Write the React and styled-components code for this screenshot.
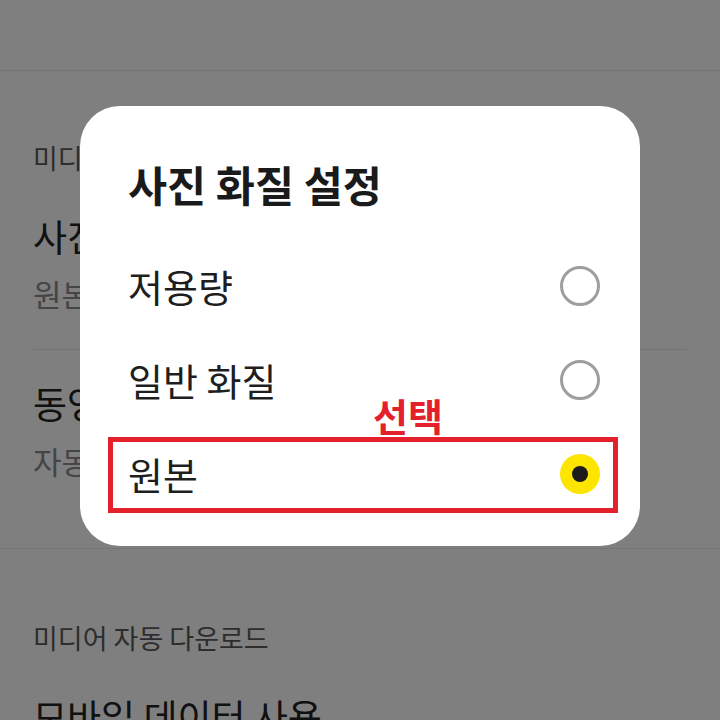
import React from "react";
import styled, { createGlobalStyle } from "styled-components";

const Global = createGlobalStyle`
  html, body { margin: 0; padding: 0; background: #ffffff; }
  body { font-family: "Noto Sans CJK KR", "Noto Sans", sans-serif; overflow: hidden; }
  * { box-sizing: border-box; }
`;

const Page = styled.div`
  width: 720px;
  height: 720px;
  background: #ffffff;
  overflow: hidden;
`;

const Header = styled.div`
  height: 71px;
  border-bottom: 1px solid #e8e8e8;
`;

const Section = styled.section`
  padding: 0 33px;
  border-bottom: ${(p) => (p.$divided ? "1px solid #e8e8e8" : "none")};
`;

const SectionTitle = styled.div`
  padding-top: ${(p) => p.$top}px;
  font-size: 27px;
  line-height: 34px;
  color: #5a5a5a;
`;

const Item = styled.div`
  padding: ${(p) => p.$pad};
  border-bottom: ${(p) => (p.$line ? "1px solid #e8e8e8" : "none")};
`;

const ItemTitle = styled.div`
  font-size: 37px;
  line-height: 48px;
  color: #222222;
  white-space: nowrap;
`;

const ItemSub = styled.div`
  margin-top: 14px;
  font-size: 31px;
  line-height: 40px;
  color: #8a8a8a;
  white-space: nowrap;
`;

const Overlay = styled.div`
  position: fixed;
  inset: 0;
  background: rgba(0, 0, 0, 0.5);
  display: flex;
  justify-content: center;
  align-items: flex-start;
  padding-top: 106px;
`;

const Dialog = styled.div`
  width: 560px;
  height: 440px;
  background: #ffffff;
  border-radius: 40px;
  padding: 52px 40px 0 48px;
`;

const DialogTitle = styled.h2`
  margin: 0 0 29px;
  font-size: 42.5px;
  line-height: 52px;
  font-weight: 700;
  color: #1a1a1a;
`;

const Option = styled.div`
  position: relative;
  height: 94px;
  display: flex;
  align-items: center;
  justify-content: space-between;
`;

const OptionLabel = styled.span`
  font-size: 38px;
  line-height: 48px;
  color: #1e1e1e;
`;

const Radio = styled.span`
  width: 40px;
  height: 40px;
  border-radius: 50%;
  display: flex;
  align-items: center;
  justify-content: center;
  border: ${(p) => (p.$checked ? "none" : "3px solid #9e9e9e")};
  background: ${(p) => (p.$checked ? "#fee500" : "#ffffff")};
  &::after {
    content: "";
    display: ${(p) => (p.$checked ? "block" : "none")};
    width: 16px;
    height: 16px;
    border-radius: 50%;
    background: #1b1b1b;
  }
`;

const Highlight = styled.span`
  position: absolute;
  left: -20px;
  right: -18px;
  top: 10px;
  bottom: 8px;
  border: 5px solid #e3202b;
  pointer-events: none;
`;

const Note = styled.span`
  position: absolute;
  left: 245px;
  bottom: 100%;
  margin-bottom: -7px;
  font-size: 38px;
  line-height: 38px;
  font-weight: 700;
  color: #e3202b;
`;

const options = [
  { label: "저용량", checked: false },
  { label: "일반 화질", checked: false },
  { label: "원본", checked: true, note: "선택" },
];

export default function App() {
  return (
    <>
      <Global />
      <Page>
        <Header />
        <Section $divided>
          <SectionTitle $top={70}>미디어 화질</SectionTitle>
          <Item $pad="37px 0 35px" $line>
            <ItemTitle>사진 화질</ItemTitle>
            <ItemSub>원본</ItemSub>
          </Item>
          <Item $pad="29px 0 67px">
            <ItemTitle>동영상 화질</ItemTitle>
            <ItemSub>자동</ItemSub>
          </Item>
        </Section>
        <Section>
          <SectionTitle $top={72}>미디어 자동 다운로드</SectionTitle>
          <Item $pad="37px 0 0">
            <ItemTitle>모바일 데이터 사용</ItemTitle>
          </Item>
        </Section>
      </Page>
      <Overlay>
        <Dialog>
          <DialogTitle>사진 화질 설정</DialogTitle>
          {options.map((o) => (
            <Option key={o.label}>
              <OptionLabel>{o.label}</OptionLabel>
              <Radio $checked={o.checked} />
              {o.note && (
                <>
                  <Highlight />
                  <Note>{o.note}</Note>
                </>
              )}
            </Option>
          ))}
        </Dialog>
      </Overlay>
    </>
  );
}
